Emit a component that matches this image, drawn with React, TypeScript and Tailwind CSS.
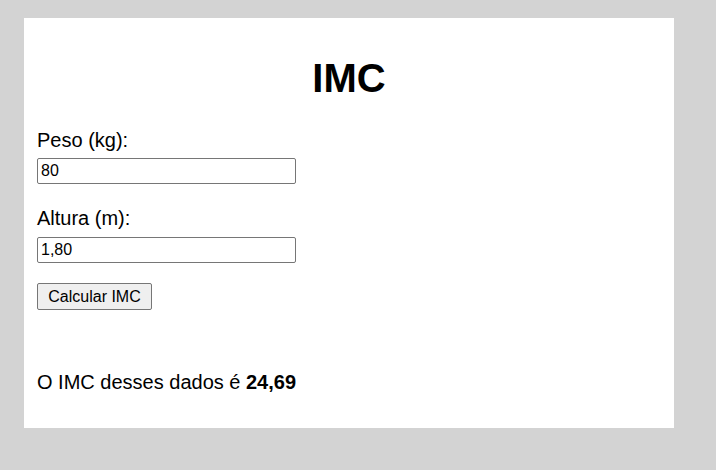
export default function App() {
  return (
    <div className="min-h-[470px] bg-[#d3d3d3] pl-[24px] pt-[18px] font-['Liberation_Sans',Arial,sans-serif] text-black">
      <div className="flex h-[410px] w-[650px] flex-col bg-white px-[13px]">
        <h1 className="mt-[39px] text-center text-[40px] font-bold leading-[42px]">IMC</h1>

        <label className="mt-[29px] text-[20px] leading-[24px]">Peso (kg):</label>
        <input
          defaultValue="80"
          className="mt-[6px] h-[26px] w-[259px] rounded-[2px] border border-[#767676] px-[3px] text-[16px] text-black outline-none"
        />

        <label className="mt-[22px] text-[20px] leading-[24px]">Altura (m):</label>
        <input
          defaultValue="1,80"
          className="mt-[7px] h-[26px] w-[259px] rounded-[2px] border border-[#767676] px-[3px] text-[16px] text-black outline-none"
        />

        <div className="mt-[20px]">
          <button className="h-[27px] w-[115px] rounded-[2px] border border-[#767676] bg-[#efefef] text-[16px] leading-none">
            Calcular IMC
          </button>
        </div>

        <p className="mt-[60px] text-[20px] leading-[24px]">
          O IMC desses dados é <strong className="font-bold">24,69</strong>
        </p>
      </div>
    </div>
  );
}
